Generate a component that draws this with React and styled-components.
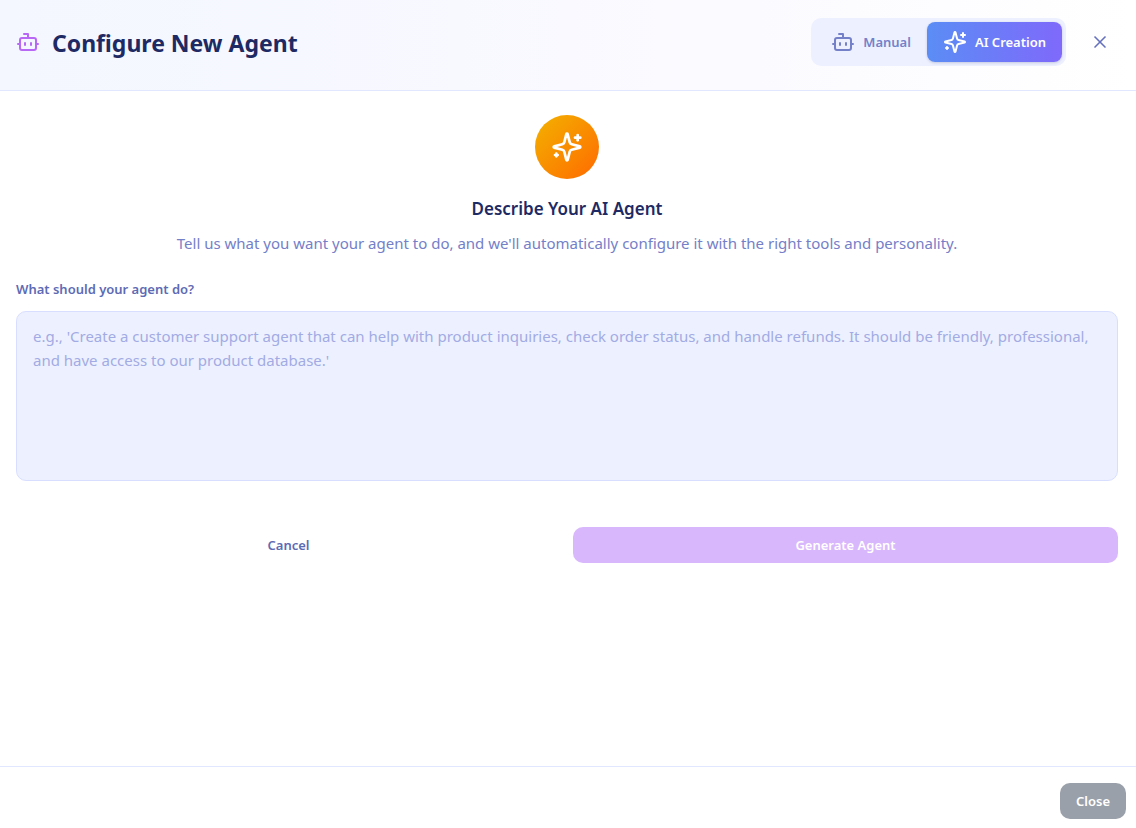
import React, { useState } from 'react'
import styled, { createGlobalStyle } from 'styled-components'
import { Bot, X } from 'lucide-react'

const GlobalStyle = createGlobalStyle`
    * {
        box-sizing: border-box;
    }
    body {
        margin: 0;
        background: #ffffff;
    }
    body, button, textarea {
        font-family: 'Noto Sans', 'Open Sans', sans-serif;
    }
    h1, h2, p {
        margin: 0;
    }
    button {
        border: none;
        cursor: pointer;
    }
`;

// Styled components
const Dialog = styled.div`
    display: flex;
    flex-direction: column;
    min-height: 100vh;
`;
const Header = styled.header`
    display: flex;
    align-items: flex-start;
    justify-content: space-between;
    padding: 18px 18px 24px 16px;
    border-bottom: 1px solid #e0e7ff;
    background: linear-gradient(to right, #f4f7ff, #f9f9ff 50%, #ffffff);
`;
const TitleRow = styled.div`
    display: flex;
    align-items: center;
    gap: 12px;
    height: 48px;
    color: #b968f5;
`;
const Title = styled.h1`
    padding-top: 2px;
    font-size: 23px;
    line-height: 32px;
    font-weight: 700;
    color: #1e2a63;
`;
const HeaderActions = styled.div`
    display: flex;
    align-items: center;
    gap: 16px;
`;
const Toggle = styled.div`
    display: flex;
    padding: 4px;
    border-radius: 10px;
    background: #edf1ff;
`;
const ToggleButton = styled.button`
    display: flex;
    align-items: center;
    gap: 8px;
    height: 40px;
    padding: 0 16px;
    border-radius: 8px;
    font-size: 13px;
    font-weight: 600;
    color: ${props => props.$active ? '#ffffff' : '#7480c8'};
    background: ${props => props.$active ? 'linear-gradient(to right, #5b8df5, #7f69fb)' : 'transparent'};
    box-shadow: ${props => props.$active ? '0 1px 3px rgba(30, 42, 99, 0.2)' : 'none'};
`;
const IconButton = styled.button`
    display: flex;
    padding: 8px;
    color: #6571bd;
    background: transparent;
`;
const Content = styled.main`
    flex: 1;
    padding: 24px 18px 24px 16px;
`;
const Intro = styled.div`
    display: flex;
    flex-direction: column;
    align-items: center;
    text-align: center;
`;
const Badge = styled.div`
    display: flex;
    align-items: center;
    justify-content: center;
    width: 64px;
    height: 64px;
    margin-bottom: 16px;
    border-radius: 50%;
    color: #ffffff;
    background: linear-gradient(to bottom right, #f3b200, #ff6a00);
`;
const IntroTitle = styled.h2`
    margin-bottom: 8px;
    font-size: 17px;
    line-height: 28px;
    font-weight: 600;
    color: #1e2a63;
`;
const IntroText = styled.p`
    font-size: 15px;
    line-height: 24px;
    color: #7480c8;
`;
const Label = styled.label`
    display: block;
    margin: 24px 0 12px;
    font-size: 13px;
    line-height: 20px;
    font-weight: 600;
    color: #5d6bb5;
`;
const Description = styled.textarea`
    display: block;
    width: 100%;
    height: 170px;
    padding: 12px 16px;
    border: 1px solid #d8deff;
    border-radius: 10px;
    outline: none;
    resize: none;
    font-size: 15px;
    line-height: 24px;
    color: #1e2a63;
    background: #edf1ff;

    &::placeholder {
        color: #a2abe4;
        opacity: 1;
    }
`;
const Actions = styled.div`
    display: grid;
    grid-template-columns: 1fr 1fr;
    gap: 12px;
    margin-top: 46px;
`;
const Button = styled.button`
    height: 36px;
    padding: 0 16px;
    border-radius: 10px;
    font-size: 13px;
    font-weight: 600;
    color: ${props => props.$color || '#ffffff'};
    background: ${props => props.$background || 'transparent'};
`;
const Footer = styled.footer`
    display: flex;
    justify-content: flex-end;
    padding: 16px 10px 9px;
    border-top: 1px solid #e0e7ff;
`;

const SparklesIcon = ({ size }) => (
    <svg
        width={size}
        height={size}
        viewBox="0 0 24 24"
        fill="none"
        stroke="currentColor"
        strokeWidth="2"
        strokeLinecap="round"
        strokeLinejoin="round"
        aria-hidden="true"
    >
        <path d="M9.937 15.5A2 2 0 0 0 8.5 14.063l-6.135-1.582a.5.5 0 0 1 0-.962L8.5 9.936A2 2 0 0 0 9.937 8.5l1.582-6.135a.5.5 0 0 1 .963 0L14.063 8.5A2 2 0 0 0 15.5 9.937l6.135 1.581a.5.5 0 0 1 0 .964L15.5 14.063a2 2 0 0 0-1.437 1.437l-1.582 6.135a.5.5 0 0 1-.963 0z" />
        <path d="M20 3v4" />
        <path d="M22 5h-4" />
        <path d="M4 17v2" />
        <path d="M5 18H3" />
    </svg>
)

const App = () => {
    const [mode, setMode] = useState('ai')
    const [description, setDescription] = useState('')

    return (
        <Dialog>
            <GlobalStyle />
            <Header>
                <TitleRow>
                    <Bot size={24} />
                    <Title>Configure New Agent</Title>
                </TitleRow>
                <HeaderActions>
                    <Toggle>
                        <ToggleButton type="button" $active={mode === 'manual'} onClick={() => setMode('manual')}>
                            <Bot size={24} />
                            Manual
                        </ToggleButton>
                        <ToggleButton type="button" $active={mode === 'ai'} onClick={() => setMode('ai')}>
                            <SparklesIcon size={24} />
                            AI Creation
                        </ToggleButton>
                    </Toggle>
                    <IconButton type="button" aria-label="Close">
                        <X size={20} />
                    </IconButton>
                </HeaderActions>
            </Header>
            <Content>
                <Intro>
                    <Badge>
                        <SparklesIcon size={32} />
                    </Badge>
                    <IntroTitle>Describe Your AI Agent</IntroTitle>
                    <IntroText>
                        Tell us what you want your agent to do, and we'll automatically configure it with the right tools and personality.
                    </IntroText>
                </Intro>
                <Label htmlFor="description">What should your agent do?</Label>
                <Description
                    id="description"
                    value={description}
                    onChange={e => setDescription(e.target.value)}
                    placeholder="e.g., 'Create a customer support agent that can help with product inquiries, check order status, and handle refunds. It should be friendly, professional, and have access to our product database.'"
                />
                <Actions>
                    <Button type="button" $color="#5d6bb5">Cancel</Button>
                    <Button type="button" $background="#d9b7fc">Generate Agent</Button>
                </Actions>
            </Content>
            <Footer>
                <Button type="button" $background="#9aa0a9">Close</Button>
            </Footer>
        </Dialog>
    )
}

export default App;
